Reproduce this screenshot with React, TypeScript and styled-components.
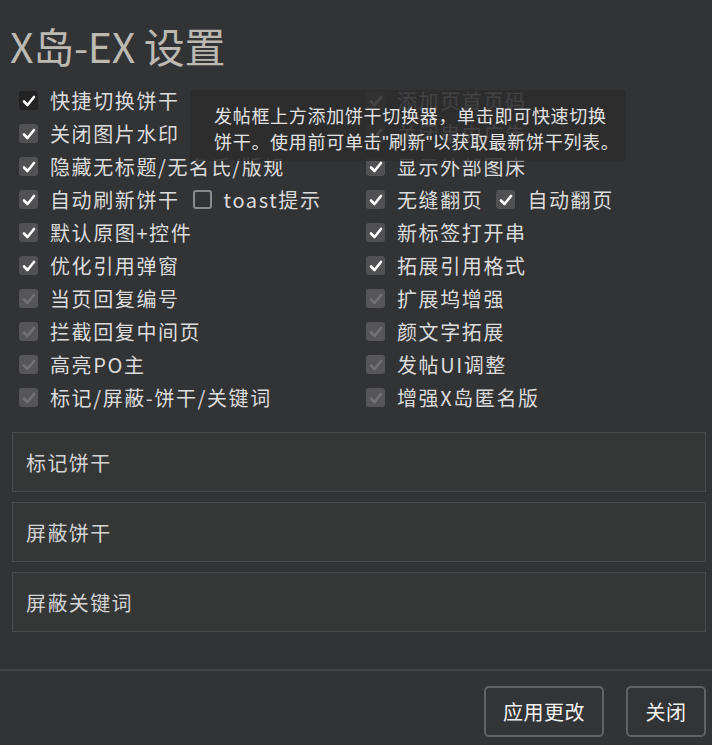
import styled, { createGlobalStyle } from "styled-components";

const Global = createGlobalStyle`
  html, body {
    margin: 0;
    padding: 0;
    background: #323335;
  }
  body {
    font-family: "Noto Sans CJK SC", "Noto Sans", sans-serif;
    color: #d6d6d6;
  }
`

const Page = styled.div`
  width: 712px;
  height: 745px;
  overflow: hidden;
  background: #323335;
  position: relative;
`

const Title = styled.h1`
  margin: 0;
  padding: 23px 0 0 10px;
  height: 64px;
  box-sizing: border-box;
  font-size: 41px;
  font-weight: 400;
  line-height: 44px;
  color: #bcb9b2;
  letter-spacing: -0.3px;
`

const Grid = styled.div`
  display: grid;
  grid-template-columns: 347px 347px;
  grid-auto-flow: column;
  grid-template-rows: repeat(10, 33px);
  padding: 20px 0 0 19px;
`

const Row = styled.div`
  display: flex;
  align-items: center;
  font-size: 20px;
  letter-spacing: 1.6px;
  color: #dcdcdc;
  white-space: nowrap;
`

const Box = styled.span<{ $kind: "on" | "focus" | "off" | "dim" }>`
  flex: none;
  width: 19px;
  height: 19px;
  box-sizing: border-box;
  border-radius: 3px;
  margin-right: 12px;
  display: flex;
  align-items: center;
  justify-content: center;
  background: ${p => p.$kind === "focus" ? "#232324" : p.$kind === "off" ? "transparent" : p.$kind === "dim" ? "#565658" : "#515153"};
  border: ${p => p.$kind === "off" ? "2px solid #8a8a8a" : "none"};
`

const Gap = styled.span`
  width: 13px;
`

const Tip = styled.div`
  position: absolute;
  left: 190px;
  top: 90px;
  width: 436px;
  padding: 12px 0 5px 24px;
  box-sizing: border-box;
  background: rgba(44, 44, 46, 0.88);
  font-size: 18px;
  line-height: 26px;
  letter-spacing: 0.7px;
  color: #e2e2e2;
  white-space: nowrap;
`

const Quote = styled.span`
  font-family: "Liberation Sans", sans-serif;
  letter-spacing: 0;
`

const Fields = styled.div`
  display: flex;
  flex-direction: column;
  gap: 10px;
  padding: 18px 6px 0 12px;
`

const Field = styled.div`
  height: 60px;
  box-sizing: border-box;
  border: 1px solid #4a4b4c;
  background: #353636;
  padding-left: 13px;
  display: flex;
  align-items: center;
  font-size: 20px;
  letter-spacing: 1.4px;
  color: #d4d4d4;
`

const Footer = styled.div`
  margin-top: 37px;
  border-top: 2px solid #434446;
  display: flex;
  justify-content: flex-end;
  gap: 22px;
  padding: 15px 6px 0 0;
`

const Button = styled.button<{ $w: number }>`
  width: ${p => p.$w}px;
  height: 51px;
  border: 2px solid #616264;
  border-radius: 5px;
  background: #333436;
  color: #f2f2f2;
  font-family: "Noto Sans CJK SC", sans-serif;
  font-size: 20px;
  letter-spacing: 0.5px;
  padding: 0;
`

type Kind = "on" | "focus" | "off" | "dim"

function Check({ kind }: { kind: Kind }) {
  const color = kind === "dim" ? "#727274" : "#ffffff"
  return (
    <Box $kind={kind}>
      {kind !== "off" && (
        <svg width="14" height="14" viewBox="0 0 14 14">
          <polyline points="2,7.5 5.5,11 12,3" fill="none" stroke={color} strokeWidth="2.6" strokeLinecap="round" strokeLinejoin="round" />
        </svg>
      )}
    </Box>
  )
}

type Item = { label: string; kind: Kind; extra?: { label: string; kind: Kind } }

const left: Item[] = [
  { label: "快捷切换饼干", kind: "focus" },
  { label: "关闭图片水印", kind: "on" },
  { label: "隐藏无标题/无名氏/版规", kind: "on" },
  { label: "自动刷新饼干", kind: "on", extra: { label: "toast提示", kind: "off" } },
  { label: "默认原图+控件", kind: "on" },
  { label: "优化引用弹窗", kind: "on" },
  { label: "当页回复编号", kind: "dim" },
  { label: "拦截回复中间页", kind: "dim" },
  { label: "高亮PO主", kind: "dim" },
  { label: "标记/屏蔽-饼干/关键词", kind: "dim" },
]

const right: Item[] = [
  { label: "添加页首页码", kind: "on" },
  { label: "关闭串内广告", kind: "on" },
  { label: "显示外部图床", kind: "on" },
  { label: "无缝翻页", kind: "on", extra: { label: "自动翻页", kind: "on" } },
  { label: "新标签打开串", kind: "on" },
  { label: "拓展引用格式", kind: "on" },
  { label: "扩展坞增强", kind: "dim" },
  { label: "颜文字拓展", kind: "dim" },
  { label: "发帖UI调整", kind: "dim" },
  { label: "增强X岛匿名版", kind: "dim" },
]

export default function App() {
  return (
    <Page>
      <Global />
      <Title>X岛-EX 设置</Title>
      <Grid>
        {[...left, ...right].map((it, i) => (
          <Row key={i}>
            <Check kind={it.kind} />
            {it.label}
            {it.extra && (
              <>
                <Gap />
                <Check kind={it.extra.kind} />
                {it.extra.label}
              </>
            )}
          </Row>
        ))}
      </Grid>
      <Fields>
        <Field>标记饼干</Field>
        <Field>屏蔽饼干</Field>
        <Field>屏蔽关键词</Field>
      </Fields>
      <Footer>
        <Button $w={120}>应用更改</Button>
        <Button $w={80}>关闭</Button>
      </Footer>
      <Tip>
        发帖框上方添加饼干切换器，单击即可快速切换<br />
        饼干。使用前可单击<Quote>"</Quote>刷新<Quote>"</Quote>以获取最新饼干列表。
      </Tip>
    </Page>
  )
}
